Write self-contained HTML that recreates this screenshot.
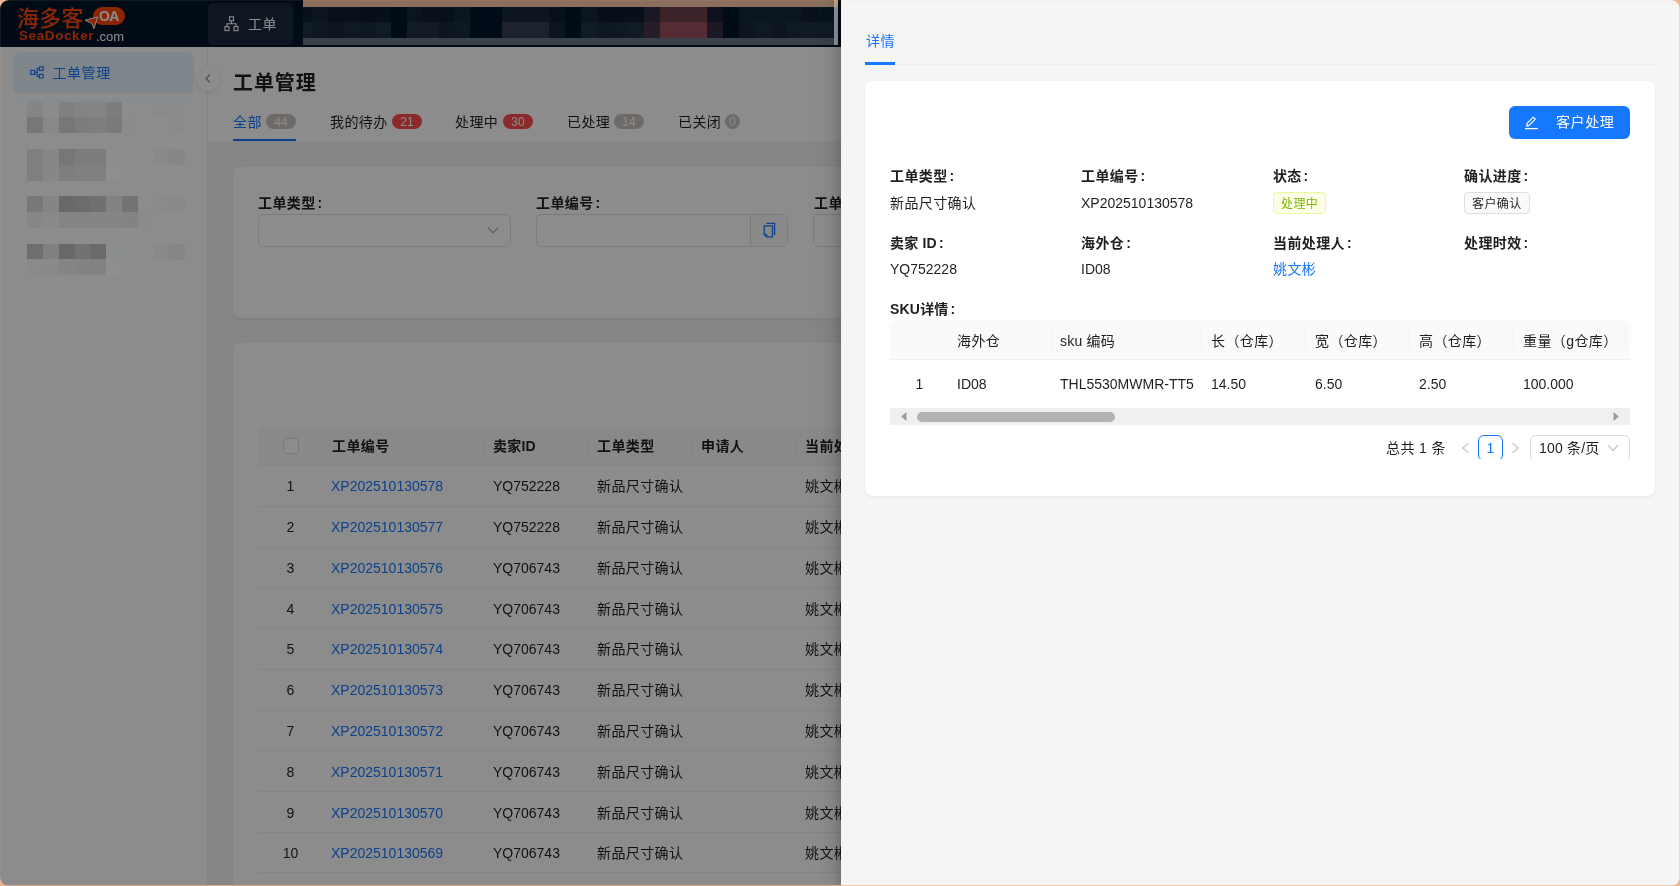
<!DOCTYPE html>
<html lang="zh-CN"><head><meta charset="utf-8"><title>工单管理</title>
<style>
*{box-sizing:border-box;margin:0;padding:0}
html,body{width:1680px;height:886px;overflow:hidden}
body{background:#ecb592;font-family:"Liberation Sans", "Noto Sans CJK SC", sans-serif;font-size:14px;line-height:22px;color:rgba(0,0,0,.88);position:relative}
.a{position:absolute}
.t{position:absolute;white-space:nowrap;line-height:22px;height:22px}
.c{letter-spacing:.4px}
.c2{letter-spacing:.2px}
.b{font-weight:bold}
#win{position:absolute;left:0;top:0;width:1680px;height:886px;clip-path:inset(0 round 9px);background:#f5f5f5;overflow:hidden;will-change:transform}
#hdr{left:0;top:0;width:1680px;height:47px;background:#001529}
#side{left:0;top:47px;width:208px;height:839px;background:#fff;border-right:1px solid #f0f0f0}
#ph{left:208px;top:47px;width:1472px;height:94px;background:#fff}
.card{position:absolute;background:#fff;border-radius:8px;box-shadow:0 1px 2px rgba(0,0,0,.05),0 2px 8px rgba(0,0,0,.04)}
.badge{position:absolute;height:15px;border-radius:8px;color:#fff;font-size:12px;line-height:17px;text-align:center;top:114px}
.tab{top:111px}
.lnk{color:#1677ff}
.sep{position:absolute;width:1px;background:#f0f0f0}
.rowline{position:absolute;left:258px;width:700px;height:1px;background:#f0f0f0}
#mask{left:0;top:0;width:1680px;height:886px;background:rgba(0,0,0,.45)}
.m{position:absolute}
#drawer{left:841px;top:0;width:839px;height:886px;background:#f5f5f5;box-shadow:-6px 0 16px rgba(0,0,0,.08),-3px 0 6px rgba(0,0,0,.12),-9px 0 28px rgba(0,0,0,.05)}
.dl{font-weight:bold}
</style></head>
<body>
<div id="win">
<div id="hdr" class="a"></div>
<div class="t" style="left:17px;top:4px;font-size:22px;line-height:30px;height:30px;color:#ff4409;font-weight:500;letter-spacing:.3px">海多客</div>
<div class="t b" style="left:19px;top:25px;font-size:13.5px;line-height:22px;color:#ff4409;letter-spacing:.6px">SeaDocker</div>
<div class="t" style="left:96px;top:26px;font-size:13px;line-height:22px;color:#fff">.com</div>
<div class="a" style="left:93px;top:7px;width:32px;height:18px;border-radius:9px;background:#ff4409"></div>
<div class="t b" style="left:99px;top:5px;font-size:14px;line-height:22px;color:#fff;letter-spacing:-.6px">OA</div>
<svg class="a" style="left:84px;top:16px" width="15" height="14" viewBox="0 0 15 14"><path d="M1 4.2 L13.6 1 L10 12.6 L7.6 7 Z" fill="#ff4409" stroke="#fff" stroke-width="1" stroke-linejoin="round"/></svg>
<div class="a" style="left:208px;top:3px;width:85px;height:42px;border-radius:5px;background:#1b2b3c"></div>
<svg class="a" style="left:224px;top:16px" width="15" height="16" viewBox="0 0 15 16" fill="none" stroke="#fff" stroke-width="1.1"><rect x="5.5" y="0.8" width="4" height="4"/><rect x="1" y="10.6" width="4" height="4"/><rect x="10" y="10.6" width="4" height="4"/><path d="M7.5 4.8V7.7M3 10.6V7.7H12V10.6"/></svg>
<div class="t c" style="left:248px;top:13px;color:#fff">工单</div>
<div id="side" class="a"></div>
<div class="a" style="left:12.6px;top:52.4px;width:181.8px;height:41.2px;border-radius:8px;background:#e6f4ff"></div>
<svg class="a" style="left:29.8px;top:66.3px" width="14" height="13" viewBox="0 0 14 13" fill="none" stroke="#1677ff" stroke-width="1.2"><rect x="0.8" y="4.4" width="4" height="4"/><rect x="9.3" y="0.8" width="4" height="3.6" rx=".6"/><rect x="9.3" y="8.4" width="4" height="3.6" rx=".6"/><path d="M4.8 6.4H7.2M9.3 2.6H7.2V10.2H9.3"/></svg>
<div class="t lnk" style="left:52.5px;top:62px;letter-spacing:.55px">工单管理</div>
<div id="ph" class="a"></div>
<div class="t b" style="left:233px;top:68.5px;font-size:20px;line-height:28px;height:28px;letter-spacing:.9px">工单管理</div>
<div class="t tab lnk c" style="left:233px">全部</div>
<div class="badge" style="left:266px;width:30px;background:#c8c1bd">44</div>
<div class="a" style="left:233px;top:139px;width:63px;height:2px;background:#1677ff"></div>
<div class="t tab c" style="left:330px">我的待办</div>
<div class="badge" style="left:392px;width:30px;background:#ff4d4f">21</div>
<div class="t tab c" style="left:455px">处理中</div>
<div class="badge" style="left:503px;width:30px;background:#ff4d4f">30</div>
<div class="t tab c" style="left:567px">已处理</div>
<div class="badge" style="left:614px;width:30px;background:#c8c1bd">14</div>
<div class="t tab c" style="left:678px">已关闭</div>
<div class="badge" style="left:725px;width:15px;background:#c8c1bd">0</div>
<div class="a" style="left:196px;top:67px;width:24px;height:24px;border-radius:12px;background:#fff;box-shadow:0 2px 8px -2px rgba(25,15,15,.07),0 1px 4px -1px rgba(25,15,15,.08),0 0 1px rgba(25,15,15,.1)"></div>
<svg class="a" style="left:204px;top:73px" width="8" height="11" viewBox="0 0 8 11" fill="none" stroke="rgba(0,0,0,.45)" stroke-width="1.2"><path d="M6 1.5L2 5.5L6 9.5"/></svg>
<div class="card" style="left:233px;top:167px;width:1420px;height:151px"></div>
<div class="t b c" style="left:258px;top:192px">工单类型<span style="margin-left:2px">:</span></div>
<div class="a" style="left:258px;top:214px;width:252.8px;height:33px;border:1px solid #e0e0e0;border-radius:6px;background:#fff"></div>
<svg class="a" style="left:487px;top:226px" width="12" height="9" viewBox="0 0 12 9" fill="none" stroke="rgba(0,0,0,.3)" stroke-width="1.2"><path d="M1 1.5L6 7L11 1.5"/></svg>
<div class="t b c" style="left:536px;top:192px">工单编号<span style="margin-left:2px">:</span></div>
<div class="a" style="left:535.6px;top:214px;width:252.2px;height:33px;border:1px solid #e0e0e0;border-radius:6px;background:#fff"></div>
<div class="a" style="left:750.3px;top:215px;width:36.5px;height:31px;border-left:1px solid #e0e0e0;background:#fafafa;border-radius:0 5px 5px 0"></div>
<svg class="a" style="left:762.5px;top:222px" width="14" height="16" viewBox="0 0 14 16" fill="none" stroke="#1677ff" stroke-width="1.3"><path d="M1.2 3.9H9.5V14.8H3.6L1.2 12.4Z"/><path d="M1.4 12.2H3.8V14.6" stroke-width="1"/><path d="M3.4 1.4H11.6V12.8"/></svg>
<div class="t b c" style="left:814px;top:192px">工单编号</div>
<div class="a" style="left:813.2px;top:214px;width:253px;height:33px;border:1px solid #e0e0e0;border-radius:6px;background:#fff"></div>
<div class="card" style="left:233px;top:343px;width:1420px;height:700px"></div>
<div class="a" style="left:258px;top:426px;width:1370px;height:40px;background:#fafafa;border-radius:8px 8px 0 0;border-bottom:1px solid #f0f0f0"></div>
<div class="a" style="left:283px;top:438px;width:16px;height:16px;border:1px solid #d9d9d9;border-radius:4px;background:#fff"></div>
<div class="t b c" style="left:332px;top:435px">工单编号</div>
<div class="t b c2" style="left:493px;top:435px">卖家ID</div>
<div class="t b c" style="left:597px;top:435px">工单类型</div>
<div class="t b c" style="left:701px;top:435px">申请人</div>
<div class="t b c" style="left:805px;top:435px">当前处理人</div>
<div class="sep" style="left:484px;top:435px;height:22px"></div>
<div class="sep" style="left:588px;top:435px;height:22px"></div>
<div class="sep" style="left:692px;top:435px;height:22px"></div>
<div class="sep" style="left:796px;top:435px;height:22px"></div>
<div class="t" style="left:270px;width:41px;text-align:center;top:475.30px">1</div>
<div class="t lnk" style="left:331px;top:475.30px">XP202510130578</div>
<div class="t" style="left:493px;top:475.30px">YQ752228</div>
<div class="t c" style="left:597px;top:475.30px">新品尺寸确认</div>
<div class="t c" style="left:805px;top:475.30px">姚文彬</div>
<div class="rowline" style="top:506.10px"></div>
<div class="t" style="left:270px;width:41px;text-align:center;top:516.08px">2</div>
<div class="t lnk" style="left:331px;top:516.08px">XP202510130577</div>
<div class="t" style="left:493px;top:516.08px">YQ752228</div>
<div class="t c" style="left:597px;top:516.08px">新品尺寸确认</div>
<div class="t c" style="left:805px;top:516.08px">姚文彬</div>
<div class="rowline" style="top:546.78px"></div>
<div class="t" style="left:270px;width:41px;text-align:center;top:556.86px">3</div>
<div class="t lnk" style="left:331px;top:556.86px">XP202510130576</div>
<div class="t" style="left:493px;top:556.86px">YQ706743</div>
<div class="t c" style="left:597px;top:556.86px">新品尺寸确认</div>
<div class="t c" style="left:805px;top:556.86px">姚文彬</div>
<div class="rowline" style="top:587.46px"></div>
<div class="t" style="left:270px;width:41px;text-align:center;top:597.64px">4</div>
<div class="t lnk" style="left:331px;top:597.64px">XP202510130575</div>
<div class="t" style="left:493px;top:597.64px">YQ706743</div>
<div class="t c" style="left:597px;top:597.64px">新品尺寸确认</div>
<div class="t c" style="left:805px;top:597.64px">姚文彬</div>
<div class="rowline" style="top:628.14px"></div>
<div class="t" style="left:270px;width:41px;text-align:center;top:638.42px">5</div>
<div class="t lnk" style="left:331px;top:638.42px">XP202510130574</div>
<div class="t" style="left:493px;top:638.42px">YQ706743</div>
<div class="t c" style="left:597px;top:638.42px">新品尺寸确认</div>
<div class="t c" style="left:805px;top:638.42px">姚文彬</div>
<div class="rowline" style="top:668.82px"></div>
<div class="t" style="left:270px;width:41px;text-align:center;top:679.20px">6</div>
<div class="t lnk" style="left:331px;top:679.20px">XP202510130573</div>
<div class="t" style="left:493px;top:679.20px">YQ706743</div>
<div class="t c" style="left:597px;top:679.20px">新品尺寸确认</div>
<div class="t c" style="left:805px;top:679.20px">姚文彬</div>
<div class="rowline" style="top:709.50px"></div>
<div class="t" style="left:270px;width:41px;text-align:center;top:719.98px">7</div>
<div class="t lnk" style="left:331px;top:719.98px">XP202510130572</div>
<div class="t" style="left:493px;top:719.98px">YQ706743</div>
<div class="t c" style="left:597px;top:719.98px">新品尺寸确认</div>
<div class="t c" style="left:805px;top:719.98px">姚文彬</div>
<div class="rowline" style="top:750.18px"></div>
<div class="t" style="left:270px;width:41px;text-align:center;top:760.76px">8</div>
<div class="t lnk" style="left:331px;top:760.76px">XP202510130571</div>
<div class="t" style="left:493px;top:760.76px">YQ706743</div>
<div class="t c" style="left:597px;top:760.76px">新品尺寸确认</div>
<div class="t c" style="left:805px;top:760.76px">姚文彬</div>
<div class="rowline" style="top:790.86px"></div>
<div class="t" style="left:270px;width:41px;text-align:center;top:801.54px">9</div>
<div class="t lnk" style="left:331px;top:801.54px">XP202510130570</div>
<div class="t" style="left:493px;top:801.54px">YQ706743</div>
<div class="t c" style="left:597px;top:801.54px">新品尺寸确认</div>
<div class="t c" style="left:805px;top:801.54px">姚文彬</div>
<div class="rowline" style="top:831.54px"></div>
<div class="t" style="left:270px;width:41px;text-align:center;top:842.32px">10</div>
<div class="t lnk" style="left:331px;top:842.32px">XP202510130569</div>
<div class="t" style="left:493px;top:842.32px">YQ706743</div>
<div class="t c" style="left:597px;top:842.32px">新品尺寸确认</div>
<div class="t c" style="left:805px;top:842.32px">姚文彬</div>
<div class="rowline" style="top:872.22px"></div>
<div id="mask" class="a"></div>
<div class="m" style="left:303px;top:0;width:535px;height:7px;background:#8a6f5e"></div>
<div class="m" style="left:303px;top:7px;width:535px;height:31px;background:#0a131c"></div>
<div class="m" style="left:303px;top:38px;width:535px;height:7px;background:#3a414a"></div>
<div class="m" style="left:303.00px;top:7px;width:9.10px;height:15px;background:#09121b"></div>
<div class="m" style="left:303.00px;top:21.5px;width:9.10px;height:16.5px;background:#111b24"></div>
<div class="m" style="left:311.80px;top:7px;width:16.12px;height:15px;background:#0b151e"></div>
<div class="m" style="left:311.80px;top:21.5px;width:16.12px;height:16.5px;background:#0e1822"></div>
<div class="m" style="left:327.62px;top:7px;width:16.12px;height:15px;background:#08111a"></div>
<div class="m" style="left:327.62px;top:21.5px;width:16.12px;height:16.5px;background:#0d161f"></div>
<div class="m" style="left:343.44px;top:7px;width:16.12px;height:15px;background:#08111a"></div>
<div class="m" style="left:343.44px;top:21.5px;width:16.12px;height:16.5px;background:#0f1922"></div>
<div class="m" style="left:359.26px;top:7px;width:16.12px;height:15px;background:#070f18"></div>
<div class="m" style="left:359.26px;top:21.5px;width:16.12px;height:16.5px;background:#0e1822"></div>
<div class="m" style="left:375.08px;top:7px;width:16.12px;height:15px;background:#070f18"></div>
<div class="m" style="left:375.08px;top:21.5px;width:16.12px;height:16.5px;background:#111b24"></div>
<div class="m" style="left:390.90px;top:7px;width:16.12px;height:15px;background:#000c18"></div>
<div class="m" style="left:390.90px;top:21.5px;width:16.12px;height:16.5px;background:#000c18"></div>
<div class="m" style="left:406.72px;top:7px;width:16.12px;height:15px;background:#0b151e"></div>
<div class="m" style="left:406.72px;top:21.5px;width:16.12px;height:16.5px;background:#131c26"></div>
<div class="m" style="left:422.54px;top:7px;width:16.12px;height:15px;background:#08111a"></div>
<div class="m" style="left:422.54px;top:21.5px;width:16.12px;height:16.5px;background:#111b24"></div>
<div class="m" style="left:438.36px;top:7px;width:16.12px;height:15px;background:#08111a"></div>
<div class="m" style="left:438.36px;top:21.5px;width:16.12px;height:16.5px;background:#0d161f"></div>
<div class="m" style="left:454.18px;top:7px;width:16.12px;height:15px;background:#0b151e"></div>
<div class="m" style="left:454.18px;top:21.5px;width:16.12px;height:16.5px;background:#0e1822"></div>
<div class="m" style="left:470.00px;top:7px;width:16.12px;height:15px;background:#000c18"></div>
<div class="m" style="left:470.00px;top:21.5px;width:16.12px;height:16.5px;background:#000c18"></div>
<div class="m" style="left:485.82px;top:7px;width:16.12px;height:15px;background:#000c18"></div>
<div class="m" style="left:485.82px;top:21.5px;width:16.12px;height:16.5px;background:#000c18"></div>
<div class="m" style="left:501.64px;top:7px;width:16.12px;height:15px;background:#0d1620"></div>
<div class="m" style="left:501.64px;top:21.5px;width:16.12px;height:16.5px;background:#1c222e"></div>
<div class="m" style="left:517.46px;top:7px;width:16.12px;height:15px;background:#0d1620"></div>
<div class="m" style="left:517.46px;top:21.5px;width:16.12px;height:16.5px;background:#1c222e"></div>
<div class="m" style="left:533.28px;top:7px;width:16.12px;height:15px;background:#0d1620"></div>
<div class="m" style="left:533.28px;top:21.5px;width:16.12px;height:16.5px;background:#1c222e"></div>
<div class="m" style="left:549.10px;top:7px;width:16.12px;height:15px;background:#08111a"></div>
<div class="m" style="left:549.10px;top:21.5px;width:16.12px;height:16.5px;background:#0d161f"></div>
<div class="m" style="left:564.92px;top:7px;width:16.12px;height:15px;background:#000c18"></div>
<div class="m" style="left:564.92px;top:21.5px;width:16.12px;height:16.5px;background:#000c18"></div>
<div class="m" style="left:580.74px;top:7px;width:16.12px;height:15px;background:#0b151e"></div>
<div class="m" style="left:580.74px;top:21.5px;width:16.12px;height:16.5px;background:#111b24"></div>
<div class="m" style="left:596.56px;top:7px;width:16.12px;height:15px;background:#070f18"></div>
<div class="m" style="left:596.56px;top:21.5px;width:16.12px;height:16.5px;background:#0e1822"></div>
<div class="m" style="left:612.38px;top:7px;width:16.12px;height:15px;background:#070f18"></div>
<div class="m" style="left:612.38px;top:21.5px;width:16.12px;height:16.5px;background:#0f1922"></div>
<div class="m" style="left:628.20px;top:7px;width:16.12px;height:15px;background:#070f18"></div>
<div class="m" style="left:628.20px;top:21.5px;width:16.12px;height:16.5px;background:#111b24"></div>
<div class="m" style="left:644.02px;top:7px;width:16.12px;height:15px;background:#1a1824"></div>
<div class="m" style="left:644.02px;top:21.5px;width:16.12px;height:16.5px;background:#281c26"></div>
<div class="m" style="left:659.84px;top:7px;width:16.12px;height:15px;background:#3c2229"></div>
<div class="m" style="left:659.84px;top:21.5px;width:16.12px;height:16.5px;background:#552c33"></div>
<div class="m" style="left:675.66px;top:7px;width:16.12px;height:15px;background:#3c2229"></div>
<div class="m" style="left:675.66px;top:21.5px;width:16.12px;height:16.5px;background:#552c33"></div>
<div class="m" style="left:691.48px;top:7px;width:16.12px;height:15px;background:#3c2229"></div>
<div class="m" style="left:691.48px;top:21.5px;width:16.12px;height:16.5px;background:#552c33"></div>
<div class="m" style="left:707.30px;top:7px;width:16.12px;height:15px;background:#0f121c"></div>
<div class="m" style="left:707.30px;top:21.5px;width:16.12px;height:16.5px;background:#1c1824"></div>
<div class="m" style="left:723.12px;top:7px;width:16.12px;height:15px;background:#000c18"></div>
<div class="m" style="left:723.12px;top:21.5px;width:16.12px;height:16.5px;background:#000c18"></div>
<div class="m" style="left:738.94px;top:7px;width:16.12px;height:15px;background:#0b151e"></div>
<div class="m" style="left:738.94px;top:21.5px;width:16.12px;height:16.5px;background:#0d161f"></div>
<div class="m" style="left:754.76px;top:7px;width:16.12px;height:15px;background:#0b151e"></div>
<div class="m" style="left:754.76px;top:21.5px;width:16.12px;height:16.5px;background:#0f1922"></div>
<div class="m" style="left:770.58px;top:7px;width:16.12px;height:15px;background:#0b151e"></div>
<div class="m" style="left:770.58px;top:21.5px;width:16.12px;height:16.5px;background:#0d161f"></div>
<div class="m" style="left:786.40px;top:7px;width:16.12px;height:15px;background:#0b151e"></div>
<div class="m" style="left:786.40px;top:21.5px;width:16.12px;height:16.5px;background:#0f1922"></div>
<div class="m" style="left:802.22px;top:7px;width:16.12px;height:15px;background:#09121b"></div>
<div class="m" style="left:802.22px;top:21.5px;width:16.12px;height:16.5px;background:#111b24"></div>
<div class="m" style="left:818.04px;top:7px;width:16.12px;height:15px;background:#0a141c"></div>
<div class="m" style="left:818.04px;top:21.5px;width:16.12px;height:16.5px;background:#111b24"></div>
<div class="m" style="left:833.86px;top:7px;width:0.44px;height:15px;background:#08111a"></div>
<div class="m" style="left:833.86px;top:21.5px;width:0.44px;height:16.5px;background:#0d161f"></div>
<div class="m" style="left:834px;top:0;width:4px;height:7px;background:#c9a48e"></div>
<div class="m" style="left:834px;top:7px;width:4px;height:38px;background:#8f969e"></div>
<div class="m" style="left:27.10px;top:101.30px;width:16.1px;height:16.1px;background:#858585"></div>
<div class="m" style="left:42.90px;top:101.30px;width:16.1px;height:16.1px;background:#8b8b8b"></div>
<div class="m" style="left:58.70px;top:101.30px;width:16.1px;height:16.1px;background:#7e8180"></div>
<div class="m" style="left:74.50px;top:101.30px;width:16.1px;height:16.1px;background:#848484"></div>
<div class="m" style="left:90.30px;top:101.30px;width:16.1px;height:16.1px;background:#848484"></div>
<div class="m" style="left:106.10px;top:101.30px;width:16.1px;height:16.1px;background:#7c7c7c"></div>
<div class="m" style="left:153.50px;top:101.30px;width:16.1px;height:16.1px;background:#8a8a8a"></div>
<div class="m" style="left:169.30px;top:101.30px;width:16.1px;height:16.1px;background:#8a8a8a"></div>
<div class="m" style="left:27.10px;top:117.10px;width:16.1px;height:16.1px;background:#777777"></div>
<div class="m" style="left:42.90px;top:117.10px;width:16.1px;height:16.1px;background:#888888"></div>
<div class="m" style="left:58.70px;top:117.10px;width:16.1px;height:16.1px;background:#757877"></div>
<div class="m" style="left:74.50px;top:117.10px;width:16.1px;height:16.1px;background:#7c7c7c"></div>
<div class="m" style="left:90.30px;top:117.10px;width:16.1px;height:16.1px;background:#7e7e7e"></div>
<div class="m" style="left:106.10px;top:117.10px;width:16.1px;height:16.1px;background:#7a7a78"></div>
<div class="m" style="left:121.90px;top:117.10px;width:16.1px;height:16.1px;background:#8b8b8b"></div>
<div class="m" style="left:153.50px;top:117.10px;width:16.1px;height:16.1px;background:#8d8d8d"></div>
<div class="m" style="left:169.30px;top:117.10px;width:16.1px;height:16.1px;background:#8a8a8a"></div>
<div class="m" style="left:27.10px;top:148.70px;width:16.1px;height:16.1px;background:#7f7f7f"></div>
<div class="m" style="left:42.90px;top:148.70px;width:16.1px;height:16.1px;background:#868686"></div>
<div class="m" style="left:58.70px;top:148.70px;width:16.1px;height:16.1px;background:#777777"></div>
<div class="m" style="left:74.50px;top:148.70px;width:16.1px;height:16.1px;background:#7c7c7c"></div>
<div class="m" style="left:90.30px;top:148.70px;width:16.1px;height:16.1px;background:#7c7c7c"></div>
<div class="m" style="left:106.10px;top:148.70px;width:16.1px;height:16.1px;background:#8b8e8d"></div>
<div class="m" style="left:153.50px;top:148.70px;width:16.1px;height:16.1px;background:#898989"></div>
<div class="m" style="left:169.30px;top:148.70px;width:16.1px;height:16.1px;background:#868686"></div>
<div class="m" style="left:27.10px;top:164.50px;width:16.1px;height:16.1px;background:#7f7f7f"></div>
<div class="m" style="left:42.90px;top:164.50px;width:16.1px;height:16.1px;background:#878785"></div>
<div class="m" style="left:58.70px;top:164.50px;width:16.1px;height:16.1px;background:#7e7e7e"></div>
<div class="m" style="left:74.50px;top:164.50px;width:16.1px;height:16.1px;background:#808080"></div>
<div class="m" style="left:90.30px;top:164.50px;width:16.1px;height:16.1px;background:#808080"></div>
<div class="m" style="left:106.10px;top:164.50px;width:16.1px;height:16.1px;background:#8d8f8e"></div>
<div class="m" style="left:169.30px;top:164.50px;width:16.1px;height:16.1px;background:#8c8c8c"></div>
<div class="m" style="left:27.10px;top:196.10px;width:16.1px;height:16.1px;background:#787878"></div>
<div class="m" style="left:42.90px;top:196.10px;width:16.1px;height:16.1px;background:#858583"></div>
<div class="m" style="left:58.70px;top:196.10px;width:16.1px;height:16.1px;background:#696969"></div>
<div class="m" style="left:74.50px;top:196.10px;width:16.1px;height:16.1px;background:#6c6c6c"></div>
<div class="m" style="left:90.30px;top:196.10px;width:16.1px;height:16.1px;background:#707070"></div>
<div class="m" style="left:106.10px;top:196.10px;width:16.1px;height:16.1px;background:#828282"></div>
<div class="m" style="left:121.90px;top:196.10px;width:16.1px;height:16.1px;background:#737373"></div>
<div class="m" style="left:153.50px;top:196.10px;width:16.1px;height:16.1px;background:#8a8a8a"></div>
<div class="m" style="left:169.30px;top:196.10px;width:16.1px;height:16.1px;background:#888888"></div>
<div class="m" style="left:27.10px;top:211.90px;width:16.1px;height:16.1px;background:#868686"></div>
<div class="m" style="left:42.90px;top:211.90px;width:16.1px;height:16.1px;background:#898989"></div>
<div class="m" style="left:58.70px;top:211.90px;width:16.1px;height:16.1px;background:#848484"></div>
<div class="m" style="left:74.50px;top:211.90px;width:16.1px;height:16.1px;background:#848484"></div>
<div class="m" style="left:90.30px;top:211.90px;width:16.1px;height:16.1px;background:#858585"></div>
<div class="m" style="left:106.10px;top:211.90px;width:16.1px;height:16.1px;background:#858585"></div>
<div class="m" style="left:121.90px;top:211.90px;width:16.1px;height:16.1px;background:#838383"></div>
<div class="m" style="left:137.70px;top:211.90px;width:16.1px;height:16.1px;background:#8b8b8b"></div>
<div class="m" style="left:27.10px;top:243.50px;width:16.1px;height:16.1px;background:#6e6e6e"></div>
<div class="m" style="left:42.90px;top:243.50px;width:16.1px;height:16.1px;background:#808080"></div>
<div class="m" style="left:58.70px;top:243.50px;width:16.1px;height:16.1px;background:#686868"></div>
<div class="m" style="left:74.50px;top:243.50px;width:16.1px;height:16.1px;background:#727272"></div>
<div class="m" style="left:90.30px;top:243.50px;width:16.1px;height:16.1px;background:#6a6a68"></div>
<div class="m" style="left:106.10px;top:243.50px;width:16.1px;height:16.1px;background:#8a8e8d"></div>
<div class="m" style="left:153.50px;top:243.50px;width:16.1px;height:16.1px;background:#898989"></div>
<div class="m" style="left:169.30px;top:243.50px;width:16.1px;height:16.1px;background:#868686"></div>
<div class="m" style="left:27.10px;top:259.30px;width:16.1px;height:16.1px;background:#8a8a8a"></div>
<div class="m" style="left:42.90px;top:259.30px;width:16.1px;height:16.1px;background:#898987"></div>
<div class="m" style="left:58.70px;top:259.30px;width:16.1px;height:16.1px;background:#858585"></div>
<div class="m" style="left:74.50px;top:259.30px;width:16.1px;height:16.1px;background:#838383"></div>
<div class="m" style="left:90.30px;top:259.30px;width:16.1px;height:16.1px;background:#838383"></div>
<div class="m" style="left:106.10px;top:259.30px;width:16.1px;height:16.1px;background:#8d8e8d"></div>
<div class="m" style="left:14px;top:98px;width:174px;height:3.5px;background:#868b90"></div>
<div id="drawer" class="a"></div>
<div class="t c" style="left:866px;top:30px;color:#1677ff">详情</div>
<div class="a" style="left:865px;top:64px;width:790px;height:1px;background:rgba(5,5,5,.03)"></div>
<div class="a" style="left:865px;top:62px;width:30px;height:2.5px;background:#1677ff"></div>
<div class="card" style="left:865px;top:81px;width:790px;height:415px;box-shadow:0 1px 2px rgba(0,0,0,.03),0 1px 6px -1px rgba(0,0,0,.02),0 2px 4px rgba(0,0,0,.02)"></div>
<div class="a" style="left:1508.6px;top:106px;width:121.4px;height:33px;border-radius:6px;background:#1677ff"></div>
<svg class="a" style="left:1524px;top:116px" width="15" height="14" viewBox="0 0 15 14" fill="none" stroke="#fff" stroke-width="1.2" stroke-linejoin="round"><path d="M2.7 10.1L3.1 7.3L9.2 1.1L11.3 3.2L5.2 9.4Z"/><path d="M1 12.6H14" stroke-width="1.3"/></svg>
<div class="t" style="left:1556px;top:111px;color:#fff;letter-spacing:.6px">客户处理</div>
<div class="t b c" style="left:890px;top:165px">工单类型<span style="margin-left:2px">:</span></div>
<div class="t b c" style="left:1081px;top:165px">工单编号<span style="margin-left:2px">:</span></div>
<div class="t b c2" style="left:1273px;top:165px">状态<span style="margin-left:2px">:</span></div>
<div class="t b c" style="left:1464px;top:165px">确认进度<span style="margin-left:2px">:</span></div>
<div class="t c" style="left:890px;top:192px">新品尺寸确认</div>
<div class="t" style="left:1081px;top:192px">XP202510130578</div>
<div class="a" style="left:1273px;top:192.4px;width:53px;height:22px;border:1px solid #e8fa9c;background:#fcffe6;border-radius:4px"></div>
<div class="t c" style="left:1281px;top:193px;font-size:12px;color:#7cb305">处理中</div>
<div class="a" style="left:1464px;top:192.4px;width:66px;height:22px;border:1px solid #dfdfdf;background:#fafafa;border-radius:4px"></div>
<div class="t c" style="left:1472px;top:193px;font-size:12px">客户确认</div>
<div class="t b c2" style="left:890px;top:232px">卖家 ID<span style="margin-left:2px">:</span></div>
<div class="t b c" style="left:1081px;top:232px">海外仓<span style="margin-left:2px">:</span></div>
<div class="t b c" style="left:1273px;top:232px">当前处理人<span style="margin-left:2px">:</span></div>
<div class="t b c" style="left:1464px;top:232px">处理时效<span style="margin-left:2px">:</span></div>
<div class="t" style="left:890px;top:258px">YQ752228</div>
<div class="t" style="left:1081px;top:258px">ID08</div>
<div class="t lnk c" style="left:1273px;top:258px">姚文彬</div>
<div class="t b c2" style="left:890px;top:298px">SKU详情<span style="margin-left:2px">:</span></div>
<div class="a" style="left:890px;top:320px;width:740px;height:40px;background:#fafafa;border-radius:8px 8px 0 0;border-bottom:1px solid #f0f0f0"></div>
<div class="t c" style="left:957px;top:330px">海外仓</div>
<div class="t c2" style="left:1060px;top:330px">sku 编码</div>
<div class="t c" style="left:1211px;top:330px">长（仓库）</div>
<div class="t c" style="left:1315px;top:330px">宽（仓库）</div>
<div class="t c" style="left:1419px;top:330px">高（仓库）</div>
<div class="t c" style="left:1523px;top:330px">重量（g仓库）</div>
<div class="sep" style="left:1051px;top:328px;height:22px"></div>
<div class="sep" style="left:1201px;top:328px;height:22px"></div>
<div class="sep" style="left:1305px;top:328px;height:22px"></div>
<div class="sep" style="left:1409px;top:328px;height:22px"></div>
<div class="sep" style="left:1513px;top:328px;height:22px"></div>
<div class="sep" style="left:1625px;top:328px;height:22px"></div>
<div class="t" style="left:957px;top:373px">ID08</div>
<div class="t" style="left:1060px;top:373px">THL5530MWMR-TT5</div>
<div class="t" style="left:1211px;top:373px">14.50</div>
<div class="t" style="left:1315px;top:373px">6.50</div>
<div class="t" style="left:1419px;top:373px">2.50</div>
<div class="t" style="left:1523px;top:373px">100.000</div>
<div class="t" style="left:890px;width:59px;text-align:center;top:373px">1</div>
<div class="a" style="left:890px;top:407.8px;width:740px;height:17.6px;background:#f0f0f0"></div>
<div class="a" style="left:917px;top:412px;width:198px;height:10px;border-radius:5px;background:#b3b3b3"></div>
<svg class="a" style="left:900px;top:411px" width="8" height="11" viewBox="0 0 8 11"><path d="M6.5 1V10L1.2 5.5Z" fill="#9a9a9a"/></svg>
<svg class="a" style="left:1612px;top:411px" width="8" height="11" viewBox="0 0 8 11"><path d="M1.5 1V10L6.8 5.5Z" fill="#9a9a9a"/></svg>
<div class="t c" style="left:1386px;top:436.6px">总共 1 条</div>
<svg class="a" style="left:1461px;top:442px" width="9" height="12" viewBox="0 0 9 12" fill="none" stroke="rgba(0,0,0,.25)" stroke-width="1.1"><path d="M7.5 1.2L1.8 6L7.5 10.8"/></svg>
<div class="a" style="left:1478px;top:435px;width:25px;height:24px;overflow:hidden"><div style="width:25px;height:26px;border:1px solid #1677ff;border-radius:6px;background:#fff"></div></div>
<div class="t" style="left:1478px;width:25px;text-align:center;top:436.6px;color:#1677ff">1</div>
<svg class="a" style="left:1511px;top:442px" width="9" height="12" viewBox="0 0 9 12" fill="none" stroke="rgba(0,0,0,.25)" stroke-width="1.1"><path d="M1.5 1.2L7.2 6L1.5 10.8"/></svg>
<div class="a" style="left:1530px;top:435px;width:100px;height:24px;overflow:hidden"><div style="width:100px;height:26px;border:1px solid #d9d9d9;border-radius:6px;background:#fff"></div></div>
<div class="t c2" style="left:1539px;top:436.6px">100 条/页</div>
<svg class="a" style="left:1607px;top:444px" width="12" height="8" viewBox="0 0 12 8" fill="none" stroke="rgba(0,0,0,.25)" stroke-width="1.1"><path d="M1 1.2L6 6.5L11 1.2"/></svg>
<div class="a" style="left:0;top:0;width:1px;height:886px;background:rgba(236,181,146,.1)"></div>
<div class="a" style="left:0;top:0;width:1680px;height:1px;background:rgba(236,181,146,.08)"></div>
<div class="a" style="left:1679px;top:0;width:1px;height:886px;background:rgba(236,181,146,.42)"></div>
<div class="a" style="left:0;top:885px;width:1680px;height:1px;background:rgba(236,181,146,.8)"></div>
</div>
</body></html>
